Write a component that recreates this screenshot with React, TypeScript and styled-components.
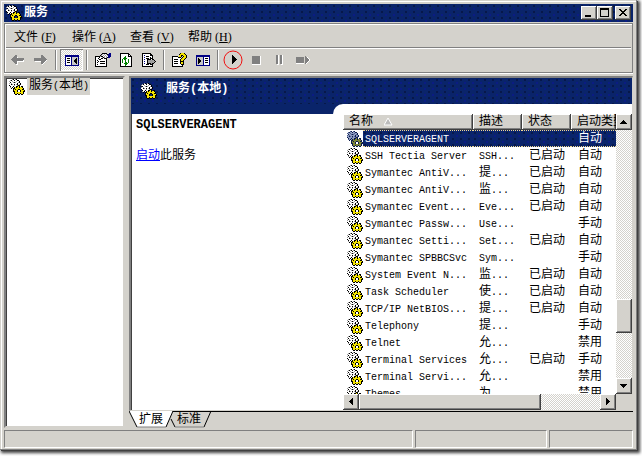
import React from 'react';
import styled, { createGlobalStyle, css } from 'styled-components';

const FACE = '#d4d2cc';
const NAVY = '#0a246a';
const DARK = '#404040';
const MID = '#808080';

const Global = createGlobalStyle`
  * { box-sizing: border-box; }
  html, body { margin: 0; background: #fff; }
  body, button {
    font-family: 'Liberation Mono', 'Noto Sans CJK SC', monospace;
    font-size: 12px;
    line-height: 16px;
    color: #000;
  }
  button { margin: 0; padding: 0; border: 0; background: none; }
`;

const navyDither = css`
  background-color: ${NAVY};
  background-image:
    radial-gradient(circle at 2px 2px, #07184a 1px, transparent 1px),
    radial-gradient(circle at 6px 5px, #0b1c84 1px, transparent 1px);
  background-size: 8px 6px;
`;

const raised = css`
  background: ${FACE};
  box-shadow: inset -1px -1px ${DARK}, inset 1px 1px #fff, inset -2px -2px ${MID};
`;

const Desktop = styled.div`
  display: flex;
  height: 100vh;
  padding: 0 5px 6px 0;
  overflow: hidden;
`;

const Window = styled.div`
  flex: 1;
  min-width: 0;
  display: flex;
  flex-direction: column;
  padding: 4px 4px 2px;
  background: ${FACE};
  box-shadow: inset -1px -1px ${MID}, inset 1px 1px ${FACE}, inset 2px 2px #fff,
    1px 1px 0 #404040, 2px 2px 3px 1px #404040;
`;

const TitleBar = styled.header`
  ${navyDither}
  display: flex;
  align-items: center;
  height: 18px;
  padding: 0 2px;
  gap: 2px;
  color: #fff;
  font-weight: bold;
`;

const TitleText = styled.h1`
  flex: 1;
  margin: 0;
  font-size: 12px;
  line-height: 18px;
`;

const WinButton = styled.button<{ $apart?: boolean }>`
  ${raised}
  width: 16px;
  height: 14px;
  display: flex;
  margin-left: ${p => (p.$apart ? 0 : -2)}px;
`;

const Bars = styled.div`
  margin-top: 1px;
  border: 1px solid ${MID};
  box-shadow: inset 1px 1px #fff, 0 1px #fff;
  padding: 1px;
`;

const MenuBar = styled.nav`
  display: flex;
  height: 23px;
  border-bottom: 1px solid ${MID};
`;

const MenuItem = styled.button`
  padding: 2px 8px 0;
  white-space: nowrap;
`;

const AccessKey = styled.span`
  display: inline-block;
  width: 18px;
  padding-left: 3px;
  font-family: 'Liberation Serif', serif;
`;

const ToolBar = styled.div`
  display: flex;
  height: 23px;
  border-top: 1px solid #fff;
`;

const ToolButton = styled.button<{ $pressed?: boolean }>`
  width: 23px;
  height: 22px;
  display: flex;
  align-items: center;
  justify-content: center;
  ${p =>
    p.$pressed &&
    css`
      background: repeating-conic-gradient(#fff 0 25%, ${FACE} 0 50%) 0 0 / 2px 2px;
      box-shadow: inset 1px 1px ${MID}, inset -1px -1px #fff;
    `}
`;

const Separator = styled.span`
  width: 2px;
  margin: 1px 3px;
  border-left: 1px solid ${MID};
  border-right: 1px solid #fff;
`;

const Main = styled.main`
  flex: 1;
  min-height: 0;
  display: flex;
  gap: 4px;
  margin-top: 3px;
`;

const sunken = css`
  background: #fff;
  border: 2px solid;
  border-color: ${MID} ${FACE} ${FACE} ${MID};
  box-shadow: inset 1px 1px ${DARK};
`;

const TreePane = styled.aside`
  ${sunken}
  width: 121px;
`;

const TreeItem = styled.div`
  display: flex;
  align-items: center;
  gap: 2px;
  padding-left: 3px;
`;

const TreeLabel = styled.span`
  padding: 0 1px 0 2px;
  background: ${FACE};
  white-space: nowrap;
`;

const RightSide = styled.div`
  flex: 1;
  min-width: 0;
  display: flex;
  flex-direction: column;
`;

const ResultPane = styled.section`
  ${sunken}
  border-bottom-width: 1px;
  border-right-width: 1px;
  flex: 1;
  min-height: 0;
  display: flex;
  flex-direction: column;
`;

const Banner = styled.div`
  ${navyDither}
  display: flex;
  align-items: center;
  gap: 9px;
  height: 26px;
  padding-left: 10px;
  color: #fff;
`;

const BannerText = styled.h2`
  margin: 0 0 4px;
  font-size: 12px;
`;

const PaneBody = styled.div`
  flex: 1;
  min-height: 0;
  display: grid;
  grid-template-columns: 202px minmax(0, 1fr);
`;

const Detail = styled.div`
  border-top: 10px solid ${NAVY};
  padding: 3px 5px;
`;

const DetailTitle = styled.h3`
  margin: 0 0 15px;
  font-size: 12px;
`;

const Link = styled.a`
  color: #0000ff;
`;

const ListCorner = styled.div`
  background: ${NAVY};
  min-height: 0;
  display: flex;
`;

const ListPanel = styled.div`
  flex: 1;
  min-width: 0;
  background: #fff;
  border-top-left-radius: 10px;
  padding: 10px 0 0 10px;
  display: grid;
  grid-template-columns: minmax(0, 1fr) 16px;
  grid-template-rows: minmax(0, 1fr) 16px;
`;

const ListView = styled.div`
  overflow: hidden;
`;

const Table = styled.table`
  width: 100%;
  table-layout: fixed;
  border-collapse: collapse;
  th, td { padding: 0; }
`;

const HeadButton = styled.button`
  ${raised}
  display: flex;
  align-items: center;
  gap: 11px;
  width: 100%;
  height: 16px;
  padding-left: 6px;
  overflow: hidden;
  white-space: nowrap;
  line-height: 18px;
`;

const NameCell = styled.div`
  display: flex;
  align-items: center;
  height: 17px;
  padding-left: 4px;
`;

const Cell = styled.div<{ $selected?: boolean; $pad: number }>`
  flex: 1;
  height: 17px;
  padding-left: ${p => p.$pad}px;
  line-height: 18px;
  white-space: nowrap;
  overflow: hidden;
  border: 0 dotted #f0d890;
  ${p =>
    p.$selected &&
    css`
      ${navyDither}
      color: #fff;
      border-width: 1px 0;
      line-height: 16px;
    `}
`;

const Track = styled.div<{ $vertical?: boolean }>`
  display: flex;
  flex-direction: ${p => (p.$vertical ? 'column' : 'row')};
  background: repeating-conic-gradient(#fff 0 25%, ${FACE} 0 50%) 0 0 / 2px 2px;
`;

const ArrowButton = styled.button`
  ${raised}
  width: 16px;
  height: 16px;
  flex: none;
  display: flex;
`;

const Thumb = styled.div<{ $grow: number }>`
  ${raised}
  flex: ${p => p.$grow} 0 0;
`;

const Gap = styled.div<{ $grow: number }>`
  flex: ${p => p.$grow} 0 0;
`;

const Corner = styled.div`
  background: ${FACE};
`;

const Tabs = styled.div`
  display: flex;
  height: 17px;
  border-top: 1px solid #000;
`;

const Tab = styled.button<{ $active?: boolean }>`
  position: relative;
  width: 44px;
  height: 17px;
  margin-top: -1px;
  margin-right: -6px;
  line-height: 18px;
  z-index: ${p => (p.$active ? 1 : 0)};
`;

const TabShape = styled.svg`
  position: absolute;
  inset: 0;
  z-index: -1;
`;

const StatusBar = styled.footer`
  display: grid;
  grid-template-columns: minmax(0, 1fr) 132px 84px;
  gap: 2px;
  height: 18px;
  margin-top: 2px;
`;

const StatusCell = styled.div`
  border: 1px solid;
  border-color: ${MID} #fff #fff ${MID};
`;

const Latin = styled.span<{ $large?: boolean }>`
  font-size: ${p => (p.$large ? 12 : 10)}px;
`;

function Mixed({ text, large }: { text: string; large?: boolean }) {
  return (
    <>
      {text.split(/([\x20-\x7e]+)/).map((part, i) =>
        i % 2 ? <Latin key={i} $large={large}>{part}</Latin> : part,
      )}
    </>
  );
}

const COLORS: Record<string, string> = {
  k: '#000', w: '#fff', g: '#a0a0a0', y: '#f4e400', b: '#000084', s: '#808080', n: '#008000', l: '#c8c8c8',
};
const DIMMED: Record<string, string> = {
  ...COLORS, k: '#0a1a4c', w: '#8e9cc0', g: '#506090', y: '#7c8434',
};

function Pixels({ rows, colors = COLORS }: { rows: string[]; colors?: Record<string, string> }) {
  return (
    <svg width={rows[0].length} height={rows.length} shapeRendering="crispEdges" aria-hidden="true">
      {rows.flatMap((row, y) =>
        [...row].map((c, x) =>
          colors[c] ? <rect key={`${x}-${y}`} x={x} y={y} width="1" height="1" fill={colors[c]} /> : null,
        ),
      )}
    </svg>
  );
}

const GEARS = [
  '...gk.gk........',
  '.gkwwkwwkk......',
  'gwwgwwwgwwk.....',
  '.kwwgkgwwgk.....',
  'gwgwwwwwkwwk....',
  'wwkgwkwgkwgk....',
  'kwwwwgwwgkk.....',
  '.kwwkwwkkyk.kk..',
  '.gwkwkykyykyyk..',
  '..k.kkyyyyyyyyk.',
  '....kykyykkyykk.',
  '....kyyyk..kyyyk',
  '....kkyyk..kyykk',
  '.....kyyyyyyyyk.',
  '.....kyykyykyyk.',
  '......kk.kk.kk..',
];
const BACK = [
  '....ss.......',
  '...sss.......',
  '..ssssw......',
  '.ssssssssssss',
  'sssssssssssss',
  '.sssssssssssw',
  '..sssswwwwwww',
  '...sssw......',
  '....ssw......',
  '.....ww......',
];
const FORWARD = [
  '.......ss....',
  '.......sss...',
  '.......ssss..',
  'ssssssssssss.',
  'sssssssssssss',
  'ssssssssssssw',
  '.wwwwwwssssw.',
  '.......sssw..',
  '.......ssw...',
  '........w....',
];
const PANEL_LEFT = [
  'bbbbbbbbbbbbbb',
  'bbbbbbbbbbbbbb',
  'bwwwwwbllllllb',
  'bwkkkwbllllklb',
  'bwwwwwblllkklb',
  'bwkkkwbllkkklb',
  'bwwwwwbllkkklb',
  'bwkkkwblllkklb',
  'bwwwwwbllllklb',
  'bwwwwwbllllllb',
  'bbbbbbbbbbbbbb',
];
const PANEL_RIGHT = [
  'bbbbbbbbbbbbbb',
  'bbbbbbbbbbbbbb',
  'bllllllbwwwwwb',
  'blkllllbwkkkwb',
  'blkklllbwwwwwb',
  'blkkkllbwkkkwb',
  'blkkkllbwwwwwb',
  'blkklllbwkkkwb',
  'blkllllbwwwwwb',
  'bllllllbwwwwwb',
  'bbbbbbbbbbbbbb',
];
const PROPERTIES = [
  '.......kkkkk..bb',
  '......kgwgwgkbbb',
  '.....kgwgwgwgbbb',
  'kkkkkgkkwgwgwbbb',
  'kwwwkwwgkgwgkbb.',
  'kwwkwwkkwkkk....',
  'kwwwkkwwwwwk....',
  'kwkwwwwwwwwk....',
  'kwwkwkkkkkwk....',
  'kwkwwwwwwwwk....',
  'kwwwwkkkkkwk....',
  'kwkwwwwwwwwk....',
  'kwwwwwwwwwwk....',
  'kkkkkkkkkkkk....',
];
const REFRESH = [
  'kkkkkkkkk...',
  'kwwwwwwwkk..',
  'kwwwwwwwkwk.',
  'kwwwwnwwkkkk',
  'kwwwnnwwwwwk',
  'kwwnnnnwwwwk',
  'kwnwnnwwnwwk',
  'kwnwwnwwnwwk',
  'kwnwwnwwnwwk',
  'kwnwwnnwnwwk',
  'kwwwnnnnwwwk',
  'kwwwwnnwwwwk',
  'kwwwwnwwwwwk',
  'kkkkkkkkkkkk',
];
const EXPORT = [
  'kkkkkkkkk.....',
  'kwwwwwwwkk....',
  'kwbwwwwwkkk...',
  'kwwwkkkwwwk...',
  'kwbwwwwwkwk...',
  'kwwwkkkwkkk...',
  'kwbwwkkkkwkk..',
  'kwwwwkggggggk.',
  'kwbwwkgggggggk',
  'kwwwwkggggggk.',
  'kwbwwkkkkgkk..',
  'kwwwkkkwkkk...',
  'kwwwwwwwwwk...',
  'kkkkkkkkkkk...',
];
const HELP = [
  '........kyyyk..',
  '.......kyyyyyk.',
  '.......yykkyyyk',
  'kkkkkk.yyk.kyyk',
  'kwwwwwkkk.kyyyk',
  'kwwwwwwwwkyyyk.',
  'kwkkkkwwkyyyk..',
  'kwwwwwwwkyyk...',
  'kwkkkkwwkkkk...',
  'kwwwwwwwkyyk...',
  'kwkkkkwwkyyk...',
  'kwwwwwwwwkkk...',
  'kwwwwwwwwwk....',
  'kkkkkkkkkkk....',
];
const STOP = [...Array(8).fill('ssssssssw'), 'wwwwwwwww'];
const PAUSE = [...Array(9).fill('ssw.ssw'), '.ww..ww'];
const RESTART = [
  '.........s....',
  'ssssssss.ssw..',
  'ssssssss.sssw.',
  'ssssssss.ssssw',
  'ssssssss.ssssw',
  'ssssssss.sssw.',
  'ssssssss.ssw..',
  'wwwwwwww.sw...',
];
const ARROWS = {
  up: 'M7 6h1v1h1v1h1v1h1v1H4V9h1V8h1V7h1z',
  down: 'M4 6h7v1h-1v1H9v1H8v1H7V9H6V8H5V7H4z',
  left: 'M6 7h1V6h1V5h1V4h1v7H9v-1H8V9H7V8H6z',
  right: 'M6 4h1v1h1v1h1v1h1v1H9v1H8v1H7v1H6z',
};

function Arrow({ dir, label }: { dir: keyof typeof ARROWS; label: string }) {
  return (
    <ArrowButton aria-label={label}>
      <svg width="16" height="16" shapeRendering="crispEdges"><path d={ARROWS[dir]} /></svg>
    </ArrowButton>
  );
}

const MENUS = [['文件', 'F'], ['操作', 'A'], ['查看', 'V'], ['帮助', 'H']];

const SERVICES = [
  ['SQLSERVERAGENT', '', '', '自动'],
  ['SSH Tectia Server', 'SSH...', '已启动', '自动'],
  ['Symantec AntiV...', '提...', '已启动', '自动'],
  ['Symantec AntiV...', '监...', '已启动', '自动'],
  ['Symantec Event...', 'Eve...', '已启动', '自动'],
  ['Symantec Passw...', 'Use...', '', '手动'],
  ['Symantec Setti...', 'Set...', '已启动', '自动'],
  ['Symantec SPBBCSvc', 'Sym...', '', '手动'],
  ['System Event N...', '监...', '已启动', '自动'],
  ['Task Scheduler', '使...', '已启动', '自动'],
  ['TCP/IP NetBIOS...', '提...', '已启动', '自动'],
  ['Telephony', '提...', '', '手动'],
  ['Telnet', '允...', '', '禁用'],
  ['Terminal Services', '允...', '已启动', '手动'],
  ['Terminal Servi...', '允...', '', '禁用'],
  ['Themes', '为...', '', '禁用'],
];

export default function App() {
  return (
    <Desktop>
      <Global />
      <Window>
        <TitleBar>
          <Pixels rows={GEARS} />
          <TitleText>服务</TitleText>
          <WinButton aria-label="最小化">
            <svg width="16" height="14"><path d="M4 9h6v2H4z" /></svg>
          </WinButton>
          <WinButton aria-label="最大化">
            <svg width="16" height="14" shapeRendering="crispEdges">
              <path fillRule="evenodd" d="M3 2h9v9H3zM4 4v6h7V4z" />
            </svg>
          </WinButton>
          <WinButton aria-label="关闭" $apart>
            <svg width="16" height="14" shapeRendering="crispEdges">
              <path d="M4 3h2v1h1v1h2V4h1V3h2v1h-1v1h-1v1H9v1h1v1h1v1h1v1h-2V9H9V8H7v1H6v1H4V9h1V8h1V7h1V6H6V5H5V4H4z" />
            </svg>
          </WinButton>
        </TitleBar>

        <Bars>
          <MenuBar>
            {MENUS.map(([name, key]) => (
              <MenuItem key={key}>{name}<AccessKey>(<u>{key}</u>)</AccessKey></MenuItem>
            ))}
          </MenuBar>
          <ToolBar role="toolbar">
            <ToolButton aria-label="后退"><Pixels rows={BACK} /></ToolButton>
            <ToolButton aria-label="前进"><Pixels rows={FORWARD} /></ToolButton>
            <Separator />
            <ToolButton aria-label="控制台树" aria-pressed="true" $pressed><Pixels rows={PANEL_LEFT} /></ToolButton>
            <Separator />
            <ToolButton aria-label="属性"><Pixels rows={PROPERTIES} /></ToolButton>
            <ToolButton aria-label="刷新"><Pixels rows={REFRESH} /></ToolButton>
            <ToolButton aria-label="导出列表"><Pixels rows={EXPORT} /></ToolButton>
            <Separator />
            <ToolButton aria-label="帮助"><Pixels rows={HELP} /></ToolButton>
            <ToolButton aria-label="操作窗格"><Pixels rows={PANEL_RIGHT} /></ToolButton>
            <Separator />
            <ToolButton aria-label="启动服务">
              <svg width="21" height="21">
                <circle cx="10" cy="10" r="9" fill="none" stroke="#f01010" />
                <path d="M9 5h1v1h1v1h1v1h1v1h1v1h-1v1h-1v1h-1v1h-1v1H9z" shapeRendering="crispEdges" />
              </svg>
            </ToolButton>
            <ToolButton aria-label="停止服务"><Pixels rows={STOP} /></ToolButton>
            <ToolButton aria-label="暂停服务"><Pixels rows={PAUSE} /></ToolButton>
            <ToolButton aria-label="重新启动服务"><Pixels rows={RESTART} /></ToolButton>
          </ToolBar>
        </Bars>

        <Main>
          <TreePane>
            <TreeItem>
              <Pixels rows={GEARS} />
              <TreeLabel><Mixed text="服务(本地)" /></TreeLabel>
            </TreeItem>
          </TreePane>

          <RightSide>
            <ResultPane>
              <Banner>
                <Pixels rows={GEARS} />
                <BannerText><Mixed text="服务(本地)" large /></BannerText>
              </Banner>
              <PaneBody>
                <Detail>
                  <DetailTitle>SQLSERVERAGENT</DetailTitle>
                  <Link href="#start">启动</Link>此服务
                </Detail>
                <ListCorner>
                  <ListPanel>
                    <ListView>
                      <Table>
                        <colgroup>
                          <col width="130" />
                          <col width="49" />
                          <col width="49" />
                          <col />
                        </colgroup>
                        <thead>
                          <tr>
                            <th>
                              <HeadButton>
                                名称
                                <svg width="9" height="8"><path d="M4 0L0 7h8z" fill="#bbb" stroke="#fff" /></svg>
                              </HeadButton>
                            </th>
                            <th><HeadButton>描述</HeadButton></th>
                            <th><HeadButton>状态</HeadButton></th>
                            <th><HeadButton>启动类型</HeadButton></th>
                          </tr>
                        </thead>
                        <tbody>
                          {SERVICES.map(([name, desc, status, type], i) => {
                            const selected = i === 0;
                            return (
                              <tr key={i} aria-selected={selected}>
                                <td>
                                  <NameCell>
                                    <Pixels rows={GEARS} colors={selected ? DIMMED : COLORS} />
                                    <Cell $selected={selected} $pad={2}><Mixed text={name} /></Cell>
                                  </NameCell>
                                </td>
                                <td><Cell $selected={selected} $pad={6}><Mixed text={desc} /></Cell></td>
                                <td><Cell $selected={selected} $pad={7}>{status}</Cell></td>
                                <td><Cell $selected={selected} $pad={7}>{type}</Cell></td>
                              </tr>
                            );
                          })}
                        </tbody>
                      </Table>
                    </ListView>
                    <Track $vertical>
                      <Arrow dir="up" label="向上滚动" />
                      <Gap $grow={170} />
                      <Thumb $grow={34} />
                      <Gap $grow={45} />
                      <Arrow dir="down" label="向下滚动" />
                    </Track>
                    <Track>
                      <Arrow dir="left" label="向左滚动" />
                      <Thumb $grow={182} />
                      <Gap $grow={59} />
                      <Arrow dir="right" label="向右滚动" />
                    </Track>
                    <Corner />
                  </ListPanel>
                </ListCorner>
              </PaneBody>
            </ResultPane>
            <Tabs role="tablist">
              <Tab role="tab" aria-selected="true" $active>
                <TabShape width="44" height="17">
                  <path d="M0 0L8 16H37L44 0z" fill="#fff" />
                  <path d="M0 0L8 16M37 16L44 0" stroke="#000" />
                  <path d="M8 16H37" stroke={MID} />
                </TabShape>
                扩展
              </Tab>
              <Tab role="tab" aria-selected="false">
                <TabShape width="44" height="17">
                  <path d="M4 8L8 16M37 16L44 0" stroke="#000" />
                  <path d="M8 16H37" stroke={MID} />
                </TabShape>
                标准
              </Tab>
            </Tabs>
          </RightSide>
        </Main>

        <StatusBar>
          <StatusCell />
          <StatusCell />
          <StatusCell />
        </StatusBar>
      </Window>
    </Desktop>
  );
}
